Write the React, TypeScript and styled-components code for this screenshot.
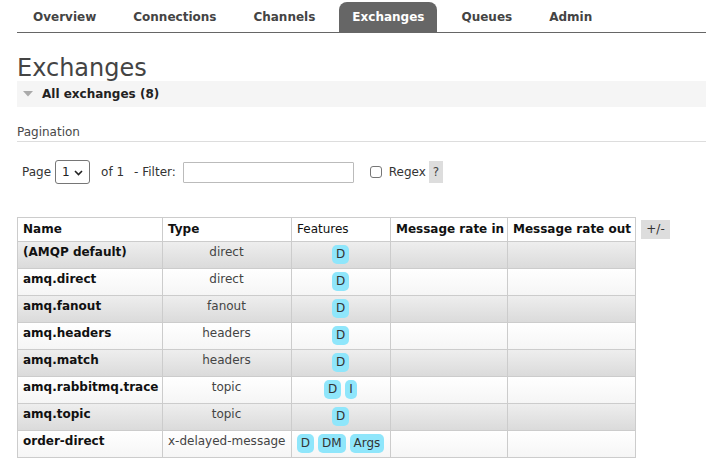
import React from 'react';
import styled, { createGlobalStyle } from 'styled-components';

const GlobalStyle = createGlobalStyle`
  html, body { margin: 0; padding: 0; background: #fff; }
  body {
    font-family: "DejaVu Sans", Verdana, sans-serif;
    font-size: 12px;
    color: #484848;
  }
  * { box-sizing: border-box; }
`;

const Page = styled.div`
  padding-left: 17px;
`;

const Nav = styled.ul`
  display: flex;
  list-style: none;
  margin: 0;
  padding: 2px 0 0 3px;
  height: 33px;
  border-bottom: 1px solid #666;
`;

const Tab = styled.li<{ $active?: boolean }>`
  height: 30px;
  line-height: 30px;
  padding: 0 13px;
  margin-right: 11px;
  font-weight: bold;
  color: ${(p) => (p.$active ? '#fff' : '#444')};
  background: ${(p) => (p.$active ? '#666' : 'transparent')};
  border-radius: 8px 8px 0 0;
`;

const Title = styled.h1`
  margin: 22px 0 0;
  font-size: 24px;
  line-height: 26px;
  font-weight: normal;
  color: #444;
`;

const SectionBar = styled.div`
  display: flex;
  align-items: center;
  height: 26px;
  background: #f5f5f5;
  padding-left: 6px;
`;

const SectionTitle = styled.span`
  margin-left: 9px;
  font-weight: bold;
  color: #222;
`;

const SubHeading = styled.h3`
  margin: 18px 0 0;
  font-size: 12px;
  font-weight: normal;
  line-height: 15px;
  padding-bottom: 1px;
  border-bottom: 1px solid #ddd;
  color: #484848;
`;

const Pager = styled.div`
  display: flex;
  align-items: center;
  height: 24px;
  margin-top: 18px;
  padding-left: 5px;
  color: #333;
`;

const Gap = styled.span<{ $ml: number }>`
  margin-left: ${(p) => p.$ml}px;
  white-space: pre;
`;

const SelectBox = styled.div`
  position: relative;
  margin-left: 4px;
  width: 35px;
  height: 24px;
  border: 1px solid #767676;
  border-radius: 3px;
  background: #fff;
  display: flex;
  align-items: center;
  padding-left: 6px;
  color: #222;
`;

const Chevron = styled.svg`
  position: absolute;
  right: 6px;
  top: 9px;
`;

const FilterInput = styled.input`
  margin-left: 7px;
  width: 171px;
  height: 21px;
  border: 1px solid #bbb;
  border-radius: 1px;
  background: #fff;
  padding: 0 4px;
  font: inherit;
`;

const Check = styled.span`
  margin-left: 16px;
  width: 12px;
  height: 12px;
  border: 1px solid #767676;
  border-radius: 3px;
  background: #fff;
`;

const Help = styled.span`
  margin-left: 3px;
  width: 14px;
  height: 22px;
  line-height: 22px;
  text-align: center;
  background: #ddd;
  color: #444;
`;

const TableRow = styled.div`
  display: flex;
  align-items: flex-start;
  margin-top: 33px;
`;

const Table = styled.table`
  border-collapse: collapse;
  table-layout: fixed;
  width: 618px;
  border: 1px solid #ccc;
`;

const Th = styled.th<{ $normal?: boolean }>`
  border: 1px solid #ccc;
  padding: 4px 6px 4px 5px;
  line-height: 15px;
  text-align: left;
  font-weight: ${(p) => (p.$normal ? 'normal' : 'bold')};
  color: #111;
  white-space: nowrap;
  background: #fff;
`;

const Tr = styled.tr<{ $alt: boolean }>`
  background: ${(p) =>
    p.$alt
      ? 'linear-gradient(#eeeeee, #dadada)'
      : 'linear-gradient(#ffffff, #f5f5f5)'};
`;

const Td = styled.td<{ $align?: string; $bold?: boolean }>`
  border: 1px solid #ccc;
  padding: 3px 6px 4px 5px;
  line-height: 15px;
  vertical-align: top;
  text-align: ${(p) => p.$align || 'left'};
  font-weight: ${(p) => (p.$bold ? 'bold' : 'normal')};
  color: ${(p) => (p.$bold ? '#111' : '#444')};
  white-space: nowrap;
`;

const Badges = styled.div`
  display: flex;
  justify-content: center;
  gap: 4px;
`;

const Badge = styled.span`
  display: inline-block;
  height: 19px;
  line-height: 19px;
  padding: 0 4px;
  border-radius: 5px;
  background: #8fe6fb;
  color: #333;
`;

const Toggle = styled.span`
  margin-left: 5px;
  margin-top: 3px;
  width: 29px;
  height: 19px;
  line-height: 19px;
  text-align: center;
  background: #ddd;
  color: #333;
`;

const tabs = ['Overview', 'Connections', 'Channels', 'Exchanges', 'Queues', 'Admin'];

const rows: { name: string; type: string; features: string[] }[] = [
  { name: '(AMQP default)', type: 'direct', features: ['D'] },
  { name: 'amq.direct', type: 'direct', features: ['D'] },
  { name: 'amq.fanout', type: 'fanout', features: ['D'] },
  { name: 'amq.headers', type: 'headers', features: ['D'] },
  { name: 'amq.match', type: 'headers', features: ['D'] },
  { name: 'amq.rabbitmq.trace', type: 'topic', features: ['D', 'I'] },
  { name: 'amq.topic', type: 'topic', features: ['D'] },
  { name: 'order-direct', type: 'x-delayed-message', features: ['D', 'DM', 'Args'] },
];

export default function App() {
  return (
    <>
      <GlobalStyle />
      <Page>
        <Nav>
          {tabs.map((t) => (
            <Tab key={t} $active={t === 'Exchanges'}>
              {t}
            </Tab>
          ))}
        </Nav>
        <Title>Exchanges</Title>
        <SectionBar>
          <svg width="10" height="6" viewBox="0 0 10 6">
            <polygon points="0,0 10,0 5,5.5" fill="#aaa" />
          </svg>
          <SectionTitle>All exchanges (8)</SectionTitle>
        </SectionBar>
        <SubHeading>Pagination</SubHeading>
        <Pager>
          <span>Page</span>
          <SelectBox>
            1
            <Chevron width="9" height="6" viewBox="0 0 9 6">
              <polyline points="1,1 4.5,4.5 8,1" fill="none" stroke="#222" strokeWidth="1.6" />
            </Chevron>
          </SelectBox>
          <Gap $ml={11}>of 1</Gap>
          <Gap $ml={10}>- Filter:</Gap>
          <FilterInput type="text" />
          <Check />
          <Gap $ml={7}>Regex</Gap>
          <Help>?</Help>
        </Pager>
        <TableRow>
          <Table>
            <colgroup>
              <col style={{ width: 145 }} />
              <col style={{ width: 129 }} />
              <col style={{ width: 99 }} />
              <col style={{ width: 117 }} />
              <col style={{ width: 128 }} />
            </colgroup>
            <thead>
              <tr>
                <Th>Name</Th>
                <Th>Type</Th>
                <Th $normal>Features</Th>
                <Th>Message rate in</Th>
                <Th>Message rate out</Th>
              </tr>
            </thead>
            <tbody>
              {rows.map((r, i) => (
                <Tr key={r.name} $alt={i % 2 === 0}>
                  <Td $bold>{r.name}</Td>
                  <Td $align="center">{r.type}</Td>
                  <Td $align="center">
                    <Badges>
                      {r.features.map((f) => (
                        <Badge key={f}>{f}</Badge>
                      ))}
                    </Badges>
                  </Td>
                  <Td />
                  <Td />
                </Tr>
              ))}
            </tbody>
          </Table>
          <Toggle>+/-</Toggle>
        </TableRow>
      </Page>
    </>
  );
}
